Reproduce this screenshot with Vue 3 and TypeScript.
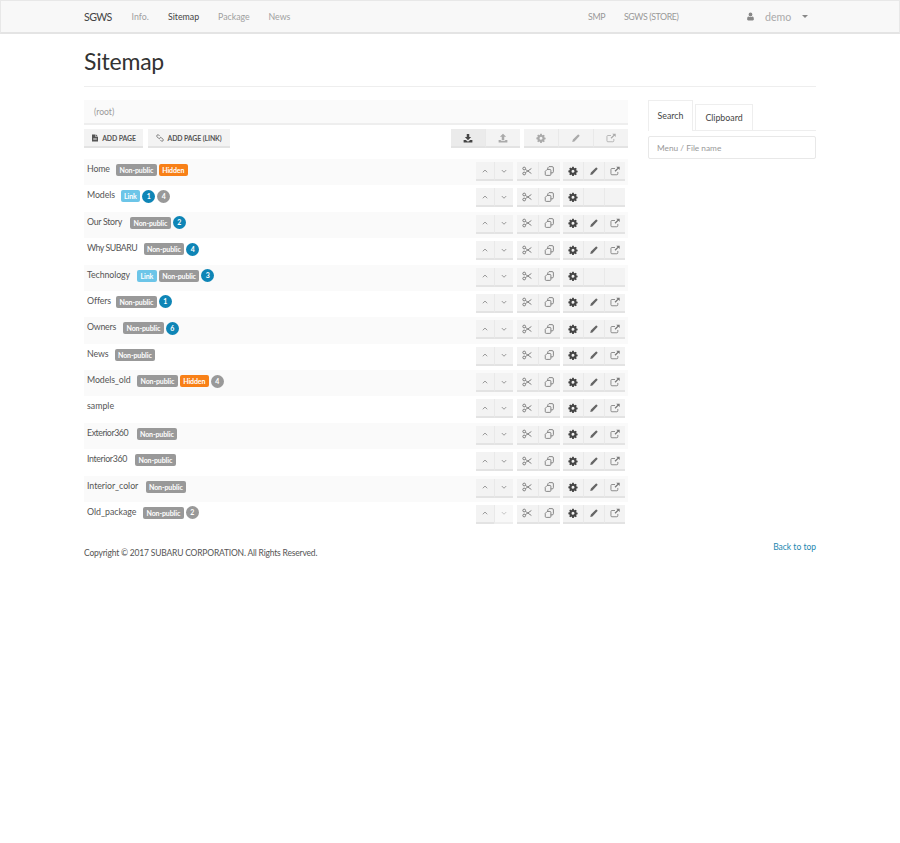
<script setup lang="ts">
interface Badge { text: string; kind: 'gray' | 'orange' | 'link' | 'blue' | 'count' }
interface Row { name: string; w: number; ls: number; badges: Badge[]; noEdit?: boolean; noDown?: boolean }

const np: Badge = { text: 'Non-public', kind: 'gray' }
const hidden: Badge = { text: 'Hidden', kind: 'orange' }
const link: Badge = { text: 'Link', kind: 'link' }
const blue = (n: number): Badge => ({ text: String(n), kind: 'blue' })
const count = (n: number): Badge => ({ text: String(n), kind: 'count' })

// w: width of the name cell (the badges start after it); ls: tracking that fits the name in it
const rows: Row[] = [
  { name: 'Home', w: 29, ls: -0.15, badges: [np, hidden] },
  { name: 'Models', w: 33.5, ls: -0.1, badges: [link, blue(1), count(4)], noEdit: true },
  { name: 'Our Story', w: 43, ls: -0.3, badges: [np, blue(2)] },
  { name: 'Why SUBARU', w: 56.5, ls: -0.5, badges: [np, blue(4)] },
  { name: 'Technology', w: 50, ls: -0.1, badges: [link, np, blue(3)], noEdit: true },
  { name: 'Offers', w: 29, ls: -0.1, badges: [np, blue(1)] },
  { name: 'Owners', w: 36, ls: -0.25, badges: [np, blue(6)] },
  { name: 'News', w: 27.5, ls: -0.1, badges: [np] },
  { name: 'Models_old', w: 50, ls: -0.1, badges: [np, hidden, count(4)] },
  { name: 'sample', w: 30, ls: 0, badges: [] },
  { name: 'Exterior360', w: 49.5, ls: -0.45, badges: [np] },
  { name: 'Interior360', w: 48, ls: -0.35, badges: [np] },
  { name: 'Interior_color', w: 58.5, ls: -0.05, badges: [np] },
  { name: 'Old_package', w: 56, ls: 0, badges: [np, count(2)], noDown: true },
]

const nameStyle = (r: Row) => ({ width: r.w + 'px', letterSpacing: r.ls + 'px' })
</script>

<template>
  <svg class="defs" aria-hidden="true">
    <symbol id="i-up" viewBox="0 0 16 16"><path d="M4.500 10 8 6.500 11.500 10" fill="none" stroke="currentColor" stroke-width="1.400" /></symbol>
    <symbol id="i-down" viewBox="0 0 16 16"><path d="M4.500 6.500 8 10l3.500-3.500" fill="none" stroke="currentColor" stroke-width="1.400" /></symbol>
    <symbol id="i-cut" viewBox="0 0 16 16">
      <circle cx="3.500" cy="4" r="2.200" fill="none" stroke="currentColor" stroke-width="1.500" />
      <circle cx="3.500" cy="12" r="2.200" fill="none" stroke="currentColor" stroke-width="1.500" />
      <path d="M5.300 5.300 15 12M5.300 10.700 15 4" fill="none" stroke="currentColor" stroke-width="1.400" />
    </symbol>
    <symbol id="i-copy" viewBox="0 0 16 16">
      <path d="M6 5.500V3l2-2h5q2 0 2 2v6q0 2-2 2h-2" fill="none" stroke="currentColor" stroke-width="1.400" />
      <path d="M5 5.500h4.500q1.500 0 1.500 1.500v6.500q0 1.500-1.500 1.500h-6Q2 15 2 13.500V8.500Z" fill="none" stroke="currentColor" stroke-width="1.400" />
    </symbol>
    <symbol id="i-gear" viewBox="-1 -1 18 18">
      <path fill="currentColor" fill-rule="evenodd" d="M6.600 .5h2.800l.4 2 1.300.6 1.800-1.100 1.900 1.900-1.100 1.800.6 1.300 2 .4v2.800l-2 .4-.6 1.300 1.100 1.800-1.900 1.900-1.800-1.100-1.300.6-.4 2H6.600l-.4-2-1.300-.6-1.800 1.100-1.900-1.900 1.100-1.800-.6-1.300-2-.4V7.200l2-.4.6-1.300-1.100-1.800 1.900-1.900 1.800 1.100 1.300-.6ZM8 5.800a2.700 2.700 0 1 0 0 5.400 2.700 2.700 0 0 0 0-5.400Z" />
    </symbol>
    <symbol id="i-pencil" viewBox="0 0 16 16"><path fill="currentColor" d="M2 14.500l1-4L10.800 2.700a1.200 1.200 0 0 1 1.700 0l.8.8a1.200 1.200 0 0 1 0 1.700L5.500 13.500Z" /></symbol>
    <symbol id="i-ext" viewBox="0 0 16 16">
      <path d="M12.500 9.500V12.500q0 1.500-1.500 1.500H3Q1.500 14 1.500 12.500V5.500Q1.500 4 3 4H8" fill="none" stroke="currentColor" stroke-width="1.300" />
      <path fill="currentColor" d="M10 1h5.500v5.500l-2-2L8.800 9.200 7.300 7.700 12 3Z" />
    </symbol>
    <symbol id="i-dl" viewBox="0 0 16 16"><path fill="currentColor" d="M6 1.500h4v5h3L8 11.500 3 6.500h3ZM1 11h3.500L8 14l3.500-3H15v4H1Z" /></symbol>
    <symbol id="i-ul" viewBox="0 0 16 16"><path fill="currentColor" d="M8 1l5 5h-3v5H6V6H3ZM1 11h3.500v1.500h7V11H15v4H1Z" /></symbol>
    <symbol id="i-file" viewBox="0 0 16 16"><path fill="currentColor" fill-rule="evenodd" d="M2 1h7v5h5v9H2ZM10 1l4 4h-4ZM4.500 8v1h7V8Zm0 2.500v1h7v-1Z" /></symbol>
    <symbol id="i-link" viewBox="0 0 16 16">
      <path d="M7 3.500 5.500 2a2.500 2.500 0 0 0-3.500 3.500L5 8.500a2.500 2.500 0 0 0 3.500 0M9 12.500l1.500 1.500a2.500 2.500 0 0 0 3.500-3.500L11 7.500a2.500 2.500 0 0 0-3.500 0" fill="none" stroke="currentColor" stroke-width="1.500" />
    </symbol>
    <symbol id="i-user" viewBox="0 0 16 16"><path fill="currentColor" d="M8 1a3.400 3.400 0 1 1 0 6.800A3.400 3.400 0 0 1 8 1ZM4.500 7.800C5.400 8.700 6.600 9 8 9s2.600-.3 3.500-1.200C13.300 8 14 10 14 13c0 1.300-.8 2-2 2H4c-1.200 0-2-.7-2-2 0-3 .7-5 2.500-5.200Z" /></symbol>
  </svg>

  <nav class="navbar">
    <div class="nav-inner">
      <span class="brand">SGWS</span>
      <a class="nav-link info">Info.</a>
      <a class="nav-link active">Sitemap</a>
      <a class="nav-link pack">Package</a>
      <a class="nav-link">News</a>
      <span class="spacer"></span>
      <a class="nav-link smp">SMP</a>
      <a class="nav-link store">SGWS (STORE)</a>
      <span class="user">
        <svg class="user-ic"><use href="#i-user" /></svg>
        <span class="user-name">demo</span>
        <span class="caret"></span>
      </span>
    </div>
  </nav>

  <main class="container">
    <h1 class="title">Sitemap</h1>
    <div class="content">
      <section class="left">
        <div class="crumb">(root)</div>
        <div class="toolbar">
          <button class="btn text-btn first"><svg class="ic-s"><use href="#i-file" /></svg>ADD PAGE</button>
          <button class="btn text-btn second"><svg class="ic-s"><use href="#i-link" /></svg>ADD PAGE (LINK)</button>
          <span class="spacer"></span>
          <div class="group t1">
            <button class="btn pressed"><svg class="ic"><use href="#i-dl" /></svg></button>
            <button class="btn dim"><svg class="ic"><use href="#i-ul" /></svg></button>
          </div>
          <div class="group t2">
            <button class="btn dim"><svg class="ic"><use href="#i-gear" /></svg></button>
            <button class="btn dim"><svg class="ic"><use href="#i-pencil" /></svg></button>
            <button class="btn dim"><svg class="ic"><use href="#i-ext" /></svg></button>
          </div>
        </div>

        <div class="tree">
          <div v-for="row in rows" :key="row.name" class="row">
            <span class="name" :style="nameStyle(row)">{{ row.name }}</span>
            <span class="badges">
              <span v-for="(b, i) in row.badges" :key="i" :class="['badge', b.kind]">{{ b.text }}</span>
            </span>
            <span class="spacer"></span>
            <div class="group g1">
              <button class="btn arrow"><svg class="ic"><use href="#i-up" /></svg></button>
              <button class="btn arrow" :class="{ off: row.noDown }"><svg class="ic"><use href="#i-down" /></svg></button>
            </div>
            <div class="group g2">
              <button class="btn mid"><svg class="ic"><use href="#i-cut" /></svg></button>
              <button class="btn mid"><svg class="ic"><use href="#i-copy" /></svg></button>
            </div>
            <div class="group g3">
              <button class="btn"><svg class="ic"><use href="#i-gear" /></svg></button>
              <button class="btn pen"><svg v-if="!row.noEdit" class="ic"><use href="#i-pencil" /></svg></button>
              <button class="btn mid"><svg v-if="!row.noEdit" class="ic"><use href="#i-ext" /></svg></button>
            </div>
          </div>
        </div>
      </section>

      <aside class="right">
        <div class="tabs">
          <a class="tab on">Search</a>
          <a class="tab">Clipboard</a>
        </div>
        <input class="search" type="text" placeholder="Menu / File name" />
      </aside>
    </div>

    <footer class="footer">
      <span class="copy">Copyright © 2017 SUBARU CORPORATION. All Rights Reserved.</span>
      <a class="top">Back to top</a>
    </footer>
  </main>
</template>

<style>
html, body { margin: 0; background: #fff; }
</style>

<style scoped>
* { box-sizing: border-box; }
.defs { position: absolute; width: 0; height: 0; overflow: hidden; }
.spacer { flex: 1; }

.navbar {
  height: 34px;
  background: #f8f8f8;
  border: 1px solid #e8e8e8;
  border-bottom: 2px solid #e4e4e4;
  font-family: Lato, "Noto Sans", sans-serif;
  font-size: 8.800px;
  color: #999;
}
.nav-inner { margin-left: 83px; width: 732px; height: 31px; display: flex; align-items: center; }
.brand { font-size: 10.600px; letter-spacing: -.6px; color: #444; width: 47.500px; }
.nav-link { color: #a0a0a0; }
.info { width: 36.500px; }
.active { color: #444; width: 50px; }
.pack { width: 50.500px; }
.smp { width: 36px; color: #999; letter-spacing: -.3px; }
.store { width: 122px; color: #999; letter-spacing: -.4px; }
.user { display: flex; align-items: center; }
.user-ic { width: 9px; height: 9px; color: #888; margin-right: 10px; }
.user-name { width: 37px; font-size: 10.600px; color: #aaa; }
.caret { width: 0; height: 0; border: 3px solid transparent; border-top: 3px solid #888; border-bottom: 0; margin-right: 8px; }

.container { width: 732px; margin-left: 84px; font-family: Lato, "Noto Sans", sans-serif; }
.title {
  margin: 0;
  height: 53px;
  padding-top: 11px;
  border-bottom: 1px solid #eee;
  font-size: 23px;
  letter-spacing: -.2px;
  line-height: 32px;
  font-weight: 400;
  color: #333;
}
.content { display: flex; margin-top: 13px; }
.left { width: 544px; }
.right { width: 168px; margin-left: 20px; }

.crumb {
  height: 25px;
  padding-left: 10px;
  background: #fafafa;
  border-bottom: 2px solid #eee;
  font-size: 8.600px;
  line-height: 24px;
  color: #999;
}
.toolbar { display: flex; height: 19px; margin-top: 4px; }
.btn {
  display: flex;
  align-items: center;
  justify-content: center;
  flex: 1;
  min-width: 0;
  padding: 0;
  background: #f3f3f3;
  border: 0;
  border-bottom: 2px solid #e3e3e3;
  border-left: 1px solid #e9e9e9;
  color: #444;
  font-family: inherit;
}
.btn:first-child { border-left: 0; }
.text-btn { flex: none; font-size: 6.900px; font-weight: 700; color: #555; letter-spacing: -.1px; }
.first { width: 59px; }
.second { width: 82px; margin-left: 5px; border-left: 0; }
.ic-s { width: 8px; height: 8px; margin-right: 3px; }
.ic { width: 10px; height: 10px; }
.group { display: flex; height: 100%; }
.t1 { width: 69px; margin-right: 4px; }
.t2 { width: 104px; }
.pressed { background: #ebebeb; color: #444; }
.dim { color: #aaa; }
.arrow { color: #888; }
.mid { color: #777; }
.pen { color: #666; }
.off { background: #f8f8f8; color: #bbb; border-bottom-color: #eee; }

.tree { margin-top: 11px; }
.row {
  display: flex;
  align-items: flex-start;
  height: 26.380px;
  padding: 3px 3px 0;
  font-size: 8.800px;
  color: #555;
}
.row:nth-child(odd) { background: #fafafa; }
.name { flex: none; white-space: nowrap; line-height: 14px; }
.badges { display: flex; align-items: center; gap: 2px; height: 14px; margin-top: 1px; }
.badge {
  display: block;
  height: 12px;
  padding: 0 3.500px;
  border-radius: 2px;
  font-size: 7px;
  letter-spacing: -.1px;
  line-height: 12px;
  font-weight: 700;
  color: #fff;
}
.gray { background: #999; }
.orange { background: #f88017; }
.link { background: #6cc5e8; }
.blue, .count { width: 13px; height: 13px; padding: 0; border-radius: 50%; text-align: center; line-height: 13px; letter-spacing: 0; }
.blue { background: #0e85b6; }
.count { background: #999; }
.row .group { height: 19px; }
.g1 { width: 37px; margin-right: 4px; }
.g2 { width: 43px; margin-right: 3.500px; }
.g3 { width: 62px; }

.tabs { display: flex; align-items: flex-end; height: 31px; border-bottom: 1px solid #eee; gap: 2px; }
.tab {
  display: block;
  height: 26px;
  width: 58px;
  border: 1px solid #eee;
  border-bottom: 0;
  text-align: center;
  font-size: 8.800px;
  line-height: 25px;
  color: #444;
  background: #fff;
}
.tab.on { width: 45px; height: 31px; line-height: 29px; position: relative; top: 1px; }
.search {
  display: block;
  width: 100%;
  height: 23px;
  margin-top: 5px;
  padding: 0 8px;
  border: 1px solid #e8e8e8;
  border-radius: 2px;
  font-family: inherit;
  font-size: 8.300px;
  outline: 0;
  color: #555;
}
.search::placeholder { color: #999; opacity: 1; }

.footer { display: flex; justify-content: space-between; margin-top: 11.500px; font-size: 8.500px; line-height: 14px; }
.copy { color: #555; padding-top: 6px; letter-spacing: -.19px; }
.top { color: #1d87b0; }
</style>
